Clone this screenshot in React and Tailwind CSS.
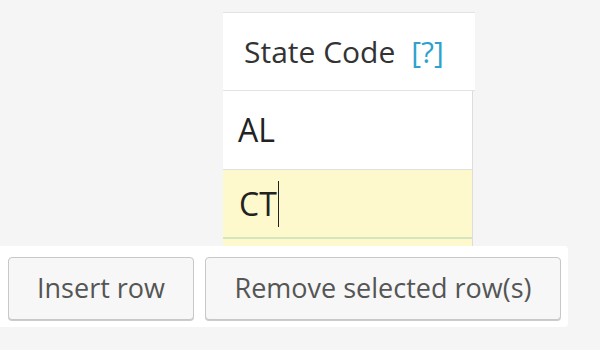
export default function App() {
  return (
    <div className="w-[600px] h-[350px] overflow-hidden bg-[#f5f5f5] pt-[12px]" style={{ fontFamily: '"Open Sans", "Liberation Sans", sans-serif' }}>
      {/* Repeater column */}
      <div className="ml-[223px] w-[252px]">
        <div className="h-[79px] bg-white border-t border-b border-[#e3e3e3] flex items-center pl-[21px] text-[30px] text-[#333]">
          <span>State Code</span>
          <a className="ml-[16px] text-[#2ea2cc]">[?]</a>
        </div>
        <div className="w-[250px] border-r border-[#dcdcdc]">
          <div className="h-[79px] bg-white border-b border-[#e0e0e0] flex items-center pl-[15px] text-[32px] text-[#222]">
            AL
          </div>
          <div className="h-[69px] bg-[#fdf9cd] border-b-2 border-[#d3e6bd] flex items-center pl-[16px] text-[32px] text-[#222]">
            CT<span className="ml-[1px] w-[1px] h-[46px] bg-[#222]" />
          </div>
          <div className="h-[7px] bg-[#fdf9cd]" />
        </div>
      </div>

      {/* Actions */}
      <div className="w-[568px] h-[81px] bg-white rounded-r-[4px] flex items-start gap-[11px] pl-[8px] pt-[11px]">
        <button className="h-[63px] w-[186px] rounded-[4px] border border-[#c8c8c8] bg-[#f7f7f7] shadow-[0_1px_0_#ccc] text-[27px] text-[#555]">
          Insert row
        </button>
        <button className="h-[63px] w-[356px] rounded-[4px] border border-[#c8c8c8] bg-[#f7f7f7] shadow-[0_1px_0_#ccc] text-[27px] text-[#555]">
          Remove selected row(s)
        </button>
      </div>
    </div>
  )
}
